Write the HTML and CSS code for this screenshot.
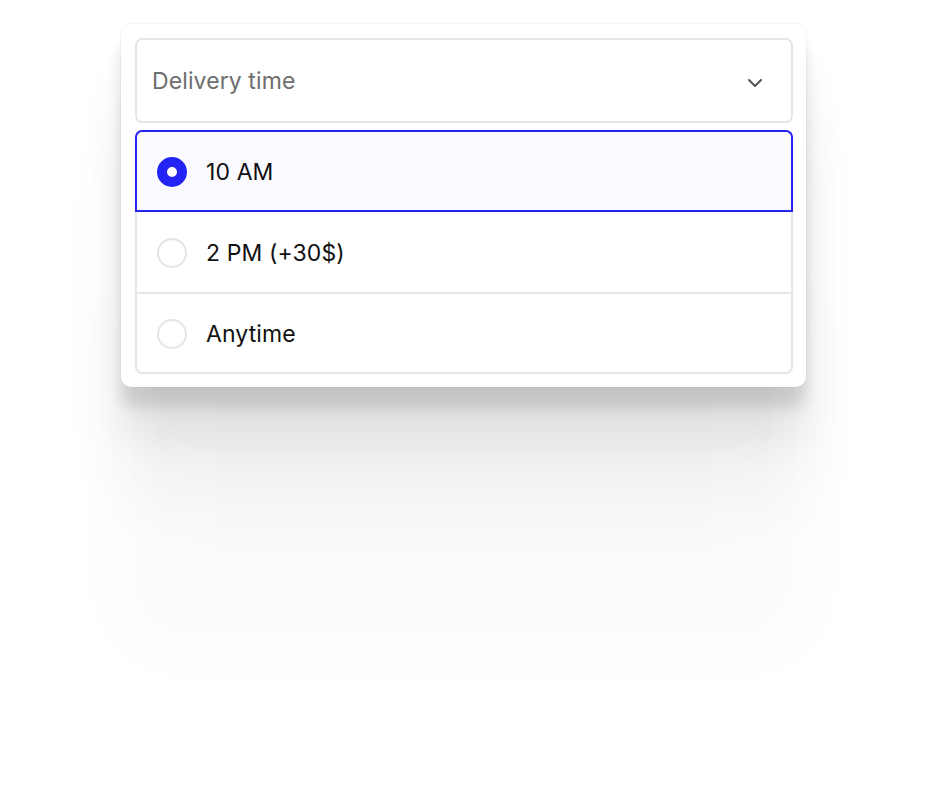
FILE: index.html
```html
<!DOCTYPE html>
<html>
<head>
<meta charset="utf-8">
<link rel="stylesheet" href="styles.css">
</head>
<body>
<div class="card">
  <div class="select">
    <span class="placeholder">Delivery time</span>
    <svg class="chev" width="16" height="10" viewBox="0 0 16 10"><path d="M2 2 L8 8 L14 2" fill="none" stroke="#555" stroke-width="2" stroke-linecap="round" stroke-linejoin="round"/></svg>
  </div>
  <div class="options">
    <div class="option selected"><span class="radio on"></span><span class="label">10 AM</span></div>
    <div class="option second"><span class="radio"></span><span class="label">2 PM (+30$)</span></div>
    <div class="option third"><span class="radio"></span><span class="label">Anytime</span></div>
  </div>
</div>
</body>
</html>
```
FILE: styles.css
```css
html, body { margin: 0; padding: 0; background: #fff; }
body { width: 928px; height: 810px; font-family: Inter, "Noto Sans", sans-serif; }
.card {
  margin: 24px 0 0 121px;
  width: 685px;
  box-sizing: border-box;
  padding: 14px 13px 13px 14px;
  background: #fff;
  border-radius: 10px;
  box-shadow:
    0 0 0 1px rgba(0,0,0,0.03),
    0 20px 14px rgba(0,0,0,0.12),
    0 50px 40px rgba(0,0,0,0.07),
    0 110px 70px rgba(0,0,0,0.045),
    0 260px 80px rgba(0,0,0,0.02);
  display: flex; flex-direction: column; gap: 7px;
}
.select {
  height: 85px; box-sizing: border-box;
  border: 2px solid #e4e4e9; border-radius: 7px;
  display: flex; align-items: center; justify-content: space-between;
  padding: 0 28px 0 15px;
}
.placeholder { font-size: 23px; letter-spacing: 0.1px; color: #6e6e6e; }
.chev { margin-top: 4px; }
.options {
  border: 2px solid #e4e4e9; border-radius: 7px;
  display: flex; flex-direction: column;
}
.option {
  height: 80px; box-sizing: border-box;
  display: flex; align-items: center; gap: 19px;
  padding-left: 20px; padding-top: 2px;
}
.option.third { border-top: 2px solid #e4e4e9; }
.option.selected {
  margin: -2px -2px 0 -2px;
  height: 82px;
  border: 2px solid #2424f5; border-radius: 7px 7px 0 0;
  background: #fafaff;
}
.radio {
  width: 30px; height: 30px; box-sizing: border-box;
  border: 2px solid #e4e4e9; border-radius: 50%; background: #fff;
}
.radio.on { border: 10px solid #2424f5; }
.label { font-size: 23px; letter-spacing: 0.1px; color: #111; }
```
